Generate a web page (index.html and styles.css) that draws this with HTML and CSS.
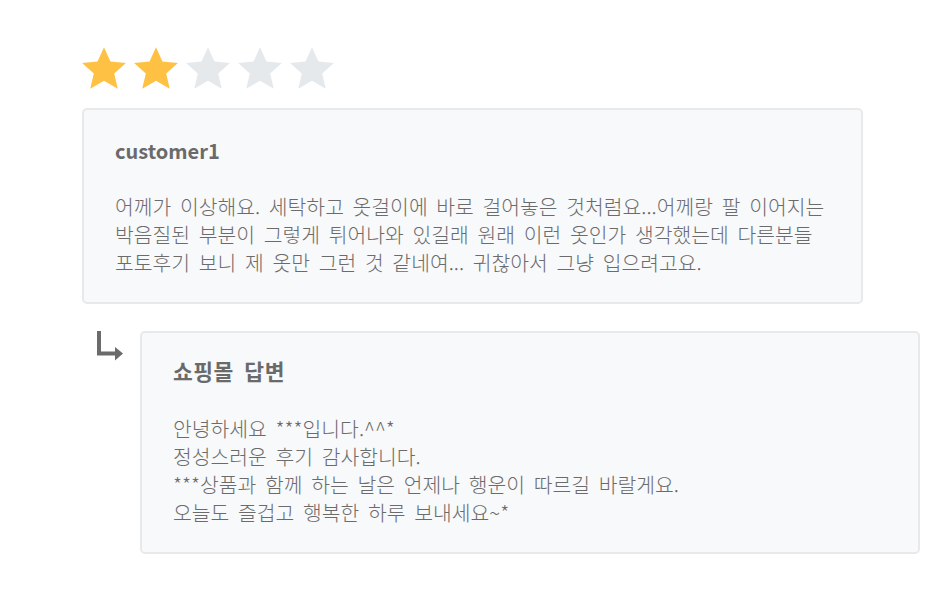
FILE: index.html
```html
<!DOCTYPE html>
<html lang="ko">
<head>
<meta charset="utf-8">
<link rel="stylesheet" href="styles.css">
</head>
<body>
<div class="page">
  <div class="stars">
    <svg class="star on" viewBox="0 0 24 24"><path d="M12 1.5l3.1 6.9 7.4.7-5.6 5 1.7 7.4L12 17.6l-6.6 3.9 1.7-7.4-5.6-5 7.4-.7z"/></svg>
    <svg class="star on" viewBox="0 0 24 24"><path d="M12 1.5l3.1 6.9 7.4.7-5.6 5 1.7 7.4L12 17.6l-6.6 3.9 1.7-7.4-5.6-5 7.4-.7z"/></svg>
    <svg class="star" viewBox="0 0 24 24"><path d="M12 1.5l3.1 6.9 7.4.7-5.6 5 1.7 7.4L12 17.6l-6.6 3.9 1.7-7.4-5.6-5 7.4-.7z"/></svg>
    <svg class="star" viewBox="0 0 24 24"><path d="M12 1.5l3.1 6.9 7.4.7-5.6 5 1.7 7.4L12 17.6l-6.6 3.9 1.7-7.4-5.6-5 7.4-.7z"/></svg>
    <svg class="star" viewBox="0 0 24 24"><path d="M12 1.5l3.1 6.9 7.4.7-5.6 5 1.7 7.4L12 17.6l-6.6 3.9 1.7-7.4-5.6-5 7.4-.7z"/></svg>
  </div>
  <div class="card review">
    <div class="title">customer1</div>
    <p class="body">어께가 이상해요. 세탁하고 옷걸이에 바로 걸어놓은 것처럼요...어께랑 팔 이어지는 박음질된 부분이 그렇게 튀어나와 있길래 원래 이런 옷인가 생각했는데 다른분들 포토후기 보니 제 옷만 그런 것 같네여... 귀찮아서 그냥 입으려고요.</p>
  </div>
  <div class="reply-row">
    <svg class="arrow" viewBox="0 0 28 30"><path d="M3 0V22.5H20" fill="none" stroke="#6b6b6b" stroke-width="4"/><path d="M19 16L27 22.5L19 29.5Z" fill="#6b6b6b"/></svg>
    <div class="card reply">
      <div class="title ko">쇼핑몰 답변</div>
      <p class="body">안녕하세요 ***입니다.^^*<br>정성스러운 후기 감사합니다.<br>***상품과 함께 하는 날은 언제나 행운이 따르길 바랄게요.<br>오늘도 즐겁고 행복한 하루 보내세요~*</p>
    </div>
  </div>
</div>
</body>
</html>
```
FILE: styles.css
```css
html, body {
  margin: 0;
  background: #fff;
}
body {
  font-family: "Noto Sans CJK KR", "Noto Sans", sans-serif;
  color: #666;
}
.page {
  padding: 44px 0 0 82px;
  width: 838px;
}
.stars {
  display: flex;
  gap: 2px;
  height: 50px;
  margin-left: -3px;
}
.star {
  width: 50px;
  height: 50px;
  fill: #e6e9ec;
}
.star.on {
  fill: #ffc144;
}
.card {
  background: #f8f9fa;
  border: 2px solid #e8e9eb;
  border-radius: 5px;
  box-sizing: border-box;
}
.review {
  margin-top: 14px;
  width: 781px;
  padding: 27px 22px 26px 31px;
}
.title {
  font-size: 20px;
  font-weight: 700;
  line-height: 28px;
  color: #6a6a6a;
}
.title.ko {
  font-size: 21.5px;
  letter-spacing: 0.5px;
  word-spacing: 4px;
}
.body {
  margin: 28px 0 0;
  font-size: 20.4px;
  font-weight: 300;
  word-spacing: 3px;
  line-height: 27.8px;
  color: #6b6b6b;
}
.reply-row {
  display: flex;
  margin-top: 27px;
  margin-left: 14px;
}
.arrow {
  width: 28px;
  height: 30px;
  flex: none;
  overflow: visible;
}
.reply {
  margin-left: 16px;
  width: 780px;
  padding: 24px 30px 26px 31px;
}
.reply .body {
  line-height: 27.7px;
  margin-top: 30px;
}
```
